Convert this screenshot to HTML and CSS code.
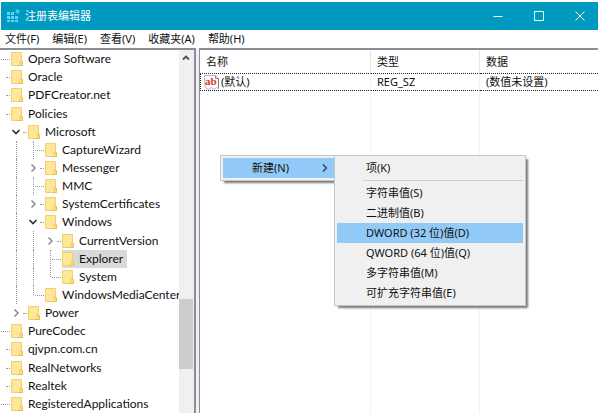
FILE: index.html
```html
<!DOCTYPE html>
<html lang="zh-CN">
<head>
<meta charset="utf-8">
<title>注册表编辑器</title>
<link rel="stylesheet" href="styles.css">
</head>
<body>
<svg class="defs" aria-hidden="true">
  <symbol id="folder" viewBox="0 0 13 16">
    <path d="M.5 1.5h10v13H.5z" fill="#ffe48f" stroke="#f0d070"/>
    <path d="M9.500 9.500l2 1v4h-4z" fill="#ffdc74" stroke="#e9c04e"/>
    <path d="M1 2h9v7.500H8.500V14H1z" fill="#ffe797"/>
  </symbol>
  <symbol id="closed" viewBox="0 0 10 10"><path d="M3.500 1.500L7 5 3.500 8.500" fill="none" stroke="#8c8c8c" stroke-width="1.500"/></symbol>
  <symbol id="open" viewBox="0 0 10 10"><path d="M1.500 3L5 6.500 8.500 3" fill="none" stroke="#333" stroke-width="1.700"/></symbol>
</svg>
<div class="window">
  <header class="titlebar">
    <svg class="app-icon" viewBox="0 0 14 14" aria-hidden="true">
      <path d="M1 3h3v3H1zM5 3h3v3H5zM1 7h3v3H1zM5 7h3v3H5zM9 7h3v3H9zM1 11h3v2H1zM5 11h3v2H5zM9 11h3v2H9z" fill="#63d3f5"/>
      <path d="M11 0l3 2-2 3-3-2z" fill="#52c4ea"/>
    </svg>
    <h1>注册表编辑器</h1>
    <div class="controls">
      <button type="button" aria-label="最小化"><svg viewBox="0 0 12 12"><path d="M1.500 6.500h9"/></svg></button>
      <button type="button" aria-label="最大化"><svg viewBox="0 0 12 12"><path d="M1.500 1.500h9v9h-9z"/></svg></button>
      <button type="button" aria-label="关闭"><svg viewBox="0 0 12 12"><path d="M1.500 1.500l9 9M10.500 1.500l-9 9"/></svg></button>
    </div>
  </header>
  <nav class="menubar">
    <button type="button">文件(F)</button>
    <button type="button">编辑(E)</button>
    <button type="button">查看(V)</button>
    <button type="button">收藏夹(A)</button>
    <button type="button">帮助(H)</button>
  </nav>
  <main class="panes">
    <section class="tree-pane">
      <ul class="tree" role="tree">
        <li role="treeitem"><i class="root"></i><span class="key"><svg><use href="#folder"/></svg>Opera Software</span></li>
        <li role="treeitem"><i class="root short"></i><span class="key"><svg><use href="#folder"/></svg>Oracle</span></li>
        <li role="treeitem"><i class="root short"></i><span class="key"><svg><use href="#folder"/></svg>PDFCreator.net</span></li>
        <li role="treeitem" aria-expanded="true"><i class="root short"></i><span class="key"><svg><use href="#folder"/></svg>Policies</span></li>
        <li role="treeitem" aria-expanded="true"><i class="root none"></i><i class="node"><svg><use href="#open"/></svg></i><span class="key"><svg><use href="#folder"/></svg>Microsoft</span></li>
        <li role="treeitem"><i class="root none"></i><i class="line"></i><i class="line tee"></i><span class="key"><svg><use href="#folder"/></svg>CaptureWizard</span></li>
        <li role="treeitem" aria-expanded="false"><i class="root none"></i><i class="line"></i><i class="node"><svg><use href="#closed"/></svg></i><span class="key"><svg><use href="#folder"/></svg>Messenger</span></li>
        <li role="treeitem"><i class="root none"></i><i class="line"></i><i class="line tee"></i><span class="key"><svg><use href="#folder"/></svg>MMC</span></li>
        <li role="treeitem" aria-expanded="false"><i class="root none"></i><i class="line"></i><i class="node"><svg><use href="#closed"/></svg></i><span class="key"><svg><use href="#folder"/></svg>SystemCertificates</span></li>
        <li role="treeitem" aria-expanded="true"><i class="root none"></i><i class="line"></i><i class="node"><svg><use href="#open"/></svg></i><span class="key"><svg><use href="#folder"/></svg>Windows</span></li>
        <li role="treeitem" aria-expanded="false"><i class="root none"></i><i class="line"></i><i class="line"></i><i class="node"><svg><use href="#closed"/></svg></i><span class="key"><svg><use href="#folder"/></svg>CurrentVersion</span></li>
        <li role="treeitem" aria-selected="true"><i class="root none"></i><i class="line"></i><i class="line"></i><i class="line tee"></i><span class="key selected"><svg><use href="#folder"/></svg>Explorer</span></li>
        <li role="treeitem"><i class="root none"></i><i class="line"></i><i class="line"></i><i class="line tee end"></i><span class="key"><svg><use href="#folder"/></svg>System</span></li>
        <li role="treeitem"><i class="root none"></i><i class="line"></i><i class="line tee end"></i><span class="key"><svg><use href="#folder"/></svg>WindowsMediaCenter</span></li>
        <li role="treeitem" aria-expanded="false"><i class="root none"></i><i class="node"><svg><use href="#closed"/></svg></i><span class="key"><svg><use href="#folder"/></svg>Power</span></li>
        <li role="treeitem"><i class="root"></i><span class="key"><svg><use href="#folder"/></svg>PureCodec</span></li>
        <li role="treeitem"><i class="root short"></i><span class="key"><svg><use href="#folder"/></svg>qjvpn.com.cn</span></li>
        <li role="treeitem"><i class="root short"></i><span class="key"><svg><use href="#folder"/></svg>RealNetworks</span></li>
        <li role="treeitem"><i class="root short"></i><span class="key"><svg><use href="#folder"/></svg>Realtek</span></li>
        <li role="treeitem"><i class="root"></i><span class="key"><svg><use href="#folder"/></svg>RegisteredApplications</span></li>
      </ul>
      <div class="scrollbar">
        <button type="button" aria-label="向上滚动"><svg viewBox="0 0 10 10"><path d="M2 6.500L5 3.500 8 6.500" fill="none" stroke="#505050" stroke-width="1.800"/></svg></button>
        <div class="space-above"></div>
        <div class="thumb"></div>
        <div class="space-below"></div>
      </div>
    </section>
    <section class="list-pane">
      <table>
        <thead><tr><th class="name">名称</th><th class="type">类型</th><th>数据</th></tr></thead>
        <tbody>
          <tr class="value">
            <td><span class="value-name"><svg class="string-icon" viewBox="0 0 15 15" aria-hidden="true"><path d="M.5.5h11l3 3v10l-2-1-2.500 2-2.500-2-2.500 2-4-2z" fill="#fff" stroke="#b5b5b5"/><path d="M11.500 1v2.500h3v10" fill="none" stroke="#888"/><text x="1" y="10">ab</text></svg>(默认)</span></td>
            <td>REG_SZ</td>
            <td>(数值未设置)</td>
          </tr>
          <tr class="rest"><td></td><td></td><td></td></tr>
        </tbody>
      </table>
      <div class="menu context">
        <button type="button" class="active"><span>新建(N)</span><svg viewBox="0 0 10 10"><path d="M3 1.500L6.500 5 3 8.500" fill="none" stroke="#333" stroke-width="1.200"/></svg></button>
      </div>
      <div class="menu submenu">
        <button type="button">项(K)</button>
        <hr>
        <button type="button">字符串值(S)</button>
        <button type="button">二进制值(B)</button>
        <button type="button" class="active">DWORD (32 位)值(D)</button>
        <button type="button">QWORD (64 位)值(Q)</button>
        <button type="button">多字符串值(M)</button>
        <button type="button">可扩充字符串值(E)</button>
      </div>
    </section>
  </main>
</div>
</body>
</html>
```
FILE: styles.css
```css
* { box-sizing: border-box; }
body {
  margin: 0;
  background: #fff;
  color: #111;
  font: 11px/16px "Noto Sans", "Noto Sans CJK SC", sans-serif;
}
button {
  margin: 0;
  padding: 0;
  border: 0;
  background: none;
  color: inherit;
  font: inherit;
}
.defs { position: absolute; width: 0; height: 0; }
.window {
  display: flex;
  flex-direction: column;
  height: 100vh;
  padding-top: 2px;
}
.titlebar {
  display: flex;
  align-items: center;
  height: 28px;
  margin-left: 1px;
  padding-left: 5px;
  background: #0099bf;
  color: #fff;
}
.titlebar h1 { margin: 0 auto 0 5px; font-size: 11px; font-weight: 400; }
.app-icon { width: 14px; height: 14px; }
.controls { display: flex; gap: 5px; }
.controls button { display: grid; place-items: center; width: 36px; height: 28px; }
.controls svg { width: 12px; height: 12px; fill: none; stroke: #fff; }
.menubar {
  display: flex;
  gap: 13px;
  height: 18px;
  padding-left: 5px;
}
.panes {
  display: flex;
  flex: 1;
  gap: 3px;
  min-height: 0;
  background: #f0f0f0;
}
.tree-pane {
  display: flex;
  width: 196px;
  border: solid #8a8e98;
  border-width: 2px 2px 0 0;
  background: #fff;
}
.tree {
  display: grid;
  grid-auto-rows: 1fr;
  flex: 1;
  min-width: 0;
  margin: 0;
  padding: 0;
  overflow: hidden;
  list-style: none;
  font-family: Lato, sans-serif;
  font-size: 12px;
}
.tree li { display: flex; min-height: 0; white-space: nowrap; }
.tree i { position: relative; flex: none; width: 17px; }
.tree .root { width: 11px; }
.root::after, .tee::after, .node::after {
  content: "";
  position: absolute;
  top: 50%;
  right: 1px;
  width: 9px;
  border-top: 1px dotted #999;
}
.root.short::after, .node::after { width: 4px; }
.root.none::after { display: none; }
.line::before {
  content: "";
  position: absolute;
  top: 0;
  bottom: 0;
  left: 5px;
  border-left: 1px dotted #999;
}
.line.end::before { bottom: 50%; }
.node { display: flex; align-items: center; }
.node svg { width: 10px; height: 10px; }
.key { display: flex; align-items: center; padding-right: 4px; }
.key svg { width: 13px; height: 16px; margin-right: 4px; }
.selected { background: #d9d9d9; }
.scrollbar {
  display: flex;
  flex-direction: column;
  width: 15px;
  padding-right: 1px;
  background: #f0f0f0;
}
.scrollbar button { display: grid; place-items: center; height: 16px; }
.scrollbar svg { width: 10px; height: 10px; }
.space-above { flex: 233; }
.thumb { flex: 70; background: #cdcdcd; }
.space-below { flex: 44; }
.list-pane {
  position: relative;
  flex: 1;
  min-width: 0;
  border: solid #8a8e98;
  border-width: 2px 0 0 1px;
  background: #fff;
}
table {
  width: 100%;
  height: 100%;
  border-collapse: separate;
  border-spacing: 0;
  table-layout: fixed;
}
th, td { padding: 0 6px; text-align: left; font-weight: 400; }
th { height: 23px; }
th.name { width: 171px; }
th.type { width: 109px; }
th:not(:last-child) { border-right: 1px solid #e5e5e5; }
td:not(:last-child) { border-right: 1px solid #eaf5fc; }
.value td { height: 18px; border-top: 1px dotted #222; border-bottom: 1px dotted #222; }
.value td:first-child { padding-left: 3px; border-left: 1px dotted #222; }
.value-name { display: flex; align-items: center; gap: 2px; }
.string-icon { width: 15px; height: 15px; }
.string-icon text { font: bold 11px "Liberation Serif", serif; fill: #d33a1c; }
.menu {
  position: absolute;
  padding: 2px;
  border: 1px solid #c8c8c8;
  background: #f0f0f0;
  box-shadow: 3px 3px 2px -1px #777;
}
.menu button {
  display: flex;
  align-items: center;
  width: 100%;
  height: 20px;
  padding-left: 29px;
  white-space: nowrap;
}
.menu .active { background: #91c9f7; }
.menu svg { width: 10px; height: 10px; margin: 0 4px 0 auto; }
.menu hr { height: 1px; margin: 2px 0 2px 26px; border: 0; background: #d0d0d0; }
.context { top: 105px; left: 20px; width: 117px; }
.submenu { top: 105px; left: 134px; width: 192px; }
```
